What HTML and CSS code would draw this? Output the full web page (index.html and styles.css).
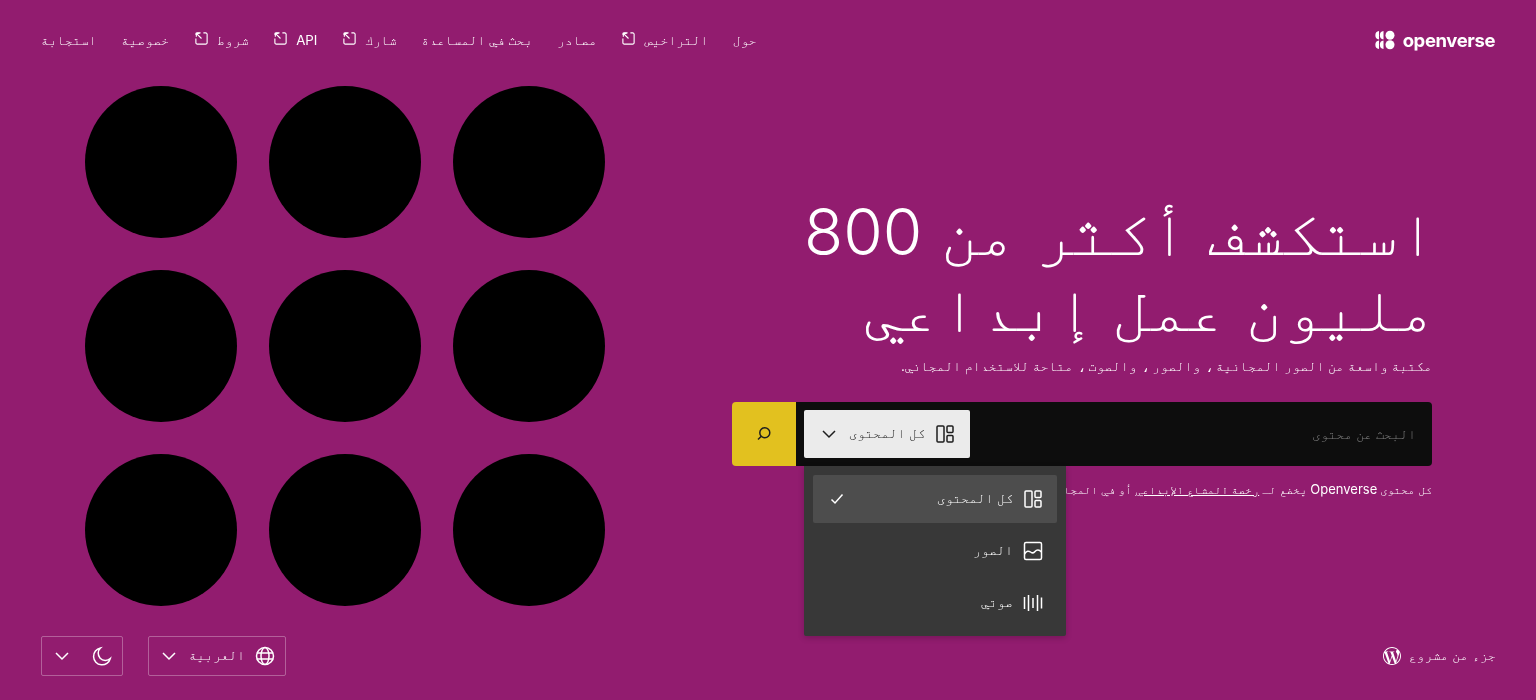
FILE: index.html
```html
<!DOCTYPE html>
<html lang="ar" dir="rtl">
<head>
  <meta charset="utf-8">
  <title>Openverse</title>
  <link rel="stylesheet" href="styles.css">
</head>
<body>
<svg class="icon-defs" width="0" height="0">
  <symbol id="ext" viewBox="0 0 16 16">
    <path d="M7 2H3.500A1.500 1.500 0 0 0 2 3.500V4M2 8v4.500A1.500 1.500 0 0 0 3.500 14h9a1.500 1.500 0 0 0 1.500-1.500v-9A1.500 1.500 0 0 0 12.500 2H10" fill="none" stroke="currentColor" stroke-width="1.200"/>
    <path d="M2.500 2.500 8 8M2.500 6V2.500H6" fill="none" stroke="currentColor" stroke-width="1.200"/>
  </symbol>
  <symbol id="all" viewBox="0 0 24 24">
    <rect x="4" y="4" width="7" height="16" rx="1" fill="none" stroke="currentColor" stroke-width="1.500"/>
    <rect x="14" y="4" width="6" height="6.500" rx="1" fill="none" stroke="currentColor" stroke-width="1.500"/>
    <rect x="14" y="13.500" width="6" height="6.500" rx="1" fill="none" stroke="currentColor" stroke-width="1.500"/>
  </symbol>
  <symbol id="chev" viewBox="0 0 24 24">
    <path d="M6 9l6 6 6-6" fill="none" stroke="currentColor" stroke-width="1.500"/>
  </symbol>
</svg>

<header class="top">
  <a class="logo">
    <span class="logo-text" dir="ltr">openverse</span>
    <svg width="20" height="20" viewBox="0 0 20 20">
      <path d="M4 1a4.300 4.300 0 0 0 0 8.500zM8.500 1a4.300 4.300 0 0 0 0 8.500zM4 10.500a4.300 4.300 0 0 0 0 8.500zM8.500 10.500a4.300 4.300 0 0 0 0 8.500z" fill="#fff"/>
      <circle cx="15" cy="5.200" r="4.500" fill="#fff"/>
      <circle cx="15" cy="14.800" r="4.500" fill="#fff"/>
    </svg>
  </a>
  <nav class="nav">
    <a>حول</a>
    <a>التراخيص <svg class="ext"><use href="#ext"/></svg></a>
    <a>مصادر</a>
    <a>بحث في المساعدة</a>
    <a>شارك <svg class="ext"><use href="#ext"/></svg></a>
    <a>API <svg class="ext"><use href="#ext"/></svg></a>
    <a>شروط <svg class="ext"><use href="#ext"/></svg></a>
    <a>خصوصية</a>
    <a>استجابة</a>
  </nav>
</header>

<main class="main">
  <section class="hero">
    <h1>استكشف أكثر من 800 مليون عمل إبداعي</h1>
    <p class="sub">مكتبة واسعة من الصور المجانية ، والصور ، والصوت ، متاحة للاستخدام المجاني.</p>
    <form class="search">
      <div class="search-field">
        <input class="search-input" placeholder="البحث عن محتوى">
        <button type="button" class="type-btn">
          <svg class="i24"><use href="#all"/></svg>
          <span class="lift">كل المحتوى</span>
          <svg class="i24"><use href="#chev"/></svg>
        </button>
      </div>
      <button type="button" class="search-btn">
        <svg width="20" height="20" viewBox="0 0 20 20"><circle cx="10.800" cy="8.800" r="5" fill="none" stroke="#1e1e1e" stroke-width="1.500"/><path d="M7.300 12.300 4 15.500" stroke="#1e1e1e" stroke-width="1.500"/></svg>
      </button>
      <div class="menu">
        <div class="menu-row is-active">
          <svg class="i24"><use href="#all"/></svg>
          <span class="menu-label lift">كل المحتوى</span>
          <svg class="i24" viewBox="0 0 24 24"><path d="M6.500 12.500 10 16l7.500-8.500" fill="none" stroke="#fff" stroke-width="1.500"/></svg>
        </div>
        <div class="menu-row">
          <svg class="i24" viewBox="0 0 24 24"><rect x="3.500" y="3.500" width="17" height="17" rx="1.500" fill="none" stroke="currentColor" stroke-width="1.500"/><path d="M3.500 15c2-3 4-3.500 6-2s3 1.500 4.500-.5 4-2.500 6.500.5" fill="none" stroke="currentColor" stroke-width="1.500"/></svg>
          <span class="menu-label lift">الصور</span>
        </div>
        <div class="menu-row">
          <svg class="i24" viewBox="0 0 24 24"><path d="M3.500 6v12M7.500 4v16M12 7v10M16.500 4v16M20.500 6.500v11" fill="none" stroke="currentColor" stroke-width="1.500"/></svg>
          <span class="menu-label lift">صوتي</span>
        </div>
      </div>
    </form>
    <p class="note">كل محتوى <span class="note-brand">Openverse</span> يخضع لـ <u>رخصة المشاع الإبداعي</u> أو في المجال العام.</p>
  </section>

  <section class="dots">
    <div class="dot"></div><div class="dot"></div><div class="dot"></div>
    <div class="dot"></div><div class="dot"></div><div class="dot"></div>
    <div class="dot"></div><div class="dot"></div><div class="dot"></div>
  </section>
</main>

<footer class="bottom">
  <a class="wp">
    <span class="lift">جزء من مشروع</span>
    <svg width="18" height="18" viewBox="0 0 24 24"><path fill="#fff" d="M21.469 6.825c.84 1.537 1.318 3.3 1.318 5.175 0 3.979-2.156 7.456-5.363 9.325l3.295-9.527c.615-1.54.82-2.771.82-3.864 0-.405-.026-.78-.07-1.11m-7.981.105c.647-.03 1.232-.105 1.232-.105.582-.075.514-.93-.067-.899 0 0-1.755.135-2.88.135-1.064 0-2.85-.15-2.85-.15-.585-.03-.661.855-.075.885 0 0 .54.061 1.125.09l1.68 4.605-2.37 7.08L5.354 6.9c.649-.03 1.234-.1 1.234-.1.585-.075.516-.93-.065-.896 0 0-1.746.138-2.874.138-.2 0-.438-.008-.69-.015C4.911 3.15 8.235 1.215 12 1.215c2.809 0 5.365 1.072 7.286 2.833-.046-.003-.091-.009-.141-.009-1.06 0-1.812.923-1.812 1.914 0 .89.513 1.643 1.06 2.531.411.72.89 1.643.89 2.977 0 .915-.354 1.994-.821 3.479l-1.075 3.585-3.9-11.61.001.014zM12 22.784c-1.059 0-2.081-.153-3.048-.437l3.237-9.406 3.315 9.087c.024.053.05.101.078.149-1.12.393-2.325.609-3.582.609M1.211 12c0-1.564.336-3.05.935-4.39L7.29 21.709C3.694 19.96 1.212 16.271 1.211 12M12 0C5.385 0 0 5.385 0 12s5.385 12 12 12 12-5.385 12-12S18.615 0 12 0"/></svg>
  </a>
  <div class="footer-tools">
    <div class="pick pick-lang">
      <svg class="i24" viewBox="0 0 24 24"><g fill="none" stroke="#fff" stroke-width="1.500"><circle cx="12" cy="12" r="8.500"/><ellipse cx="12" cy="12" rx="4" ry="8.500"/><path d="M3.800 9h16.400M3.800 15h16.400"/></g></svg>
      <span class="lift">العربية</span>
      <svg class="i24"><use href="#chev"/></svg>
    </div>
    <div class="pick pick-theme">
      <svg class="i24" viewBox="0 0 24 24"><path d="M10.500 4a8.500 8.500 0 1 0 9.800 10.500 7 7 0 0 1-9.800-10.500z" fill="none" stroke="#fff" stroke-width="1.500"/></svg>
      <svg class="i24"><use href="#chev"/></svg>
    </div>
  </div>
</footer>
</body>
</html>
```

FILE: styles.css
```css
* {
  box-sizing: border-box;
}

body {
  margin: 0;
  height: 700px;
  overflow: hidden;
  display: flex;
  flex-direction: column;
  background-color: #921c6f;
  color: #fff;
  font-family: Inter, FreeMono, "DejaVu Sans Mono", monospace;
  will-change: transform;
}

.icon-defs {
  position: absolute;
}

.i24 {
  width: 24px;
  height: 24px;
  flex: none;
}

/* the arabic fallback sits a px low in flex rows */
.lift {
  padding-bottom: 2px;
}

.top {
  height: 80px;
  flex: none;
  padding: 0 41px;
  display: flex;
  align-items: center;
  justify-content: space-between;
}

.logo {
  display: flex;
  align-items: center;
  gap: 8px;
}

.logo-text {
  font-size: 18.5px;
  font-weight: 700;
  letter-spacing: -0.4px;
}

.nav {
  display: flex;
  gap: 24.5px;
  font-size: 13.3px;
}

.nav a {
  display: flex;
  align-items: center;
  gap: 8px;
  padding-bottom: 1px;
}

.ext {
  width: 15px;
  height: 15px;
  margin-top: -3px;
}

.main {
  flex: 1;
  display: flex;
  justify-content: space-between;
  padding: 6px 104px 0 85px;
}

.hero {
  width: 700px;
  padding-top: 108.4px;
}

.hero h1 {
  margin: 0 -5px 0 0;
  font-size: 64px;
  line-height: 76px;
  font-weight: 300;
}

.sub {
  margin: 10px 0 0;
  font-size: 13.4px;
  line-height: 20px;
}

.search {
  position: relative;
  margin-top: 25.6px;
  height: 64px;
  display: flex;
}

.search-field {
  flex: 1;
  display: flex;
  align-items: center;
  padding: 8px;
  background-color: #0d0d0d;
  border-radius: 0 4px 4px 0;
}

.search-input {
  flex: 1;
  min-width: 0;
  padding: 0 8px;
  border: 0;
  outline: 0;
  background: none;
  color: #fff;
  font: 13.33px Inter, FreeMono, "DejaVu Sans Mono", monospace;
}

.search-input::placeholder {
  color: #808080;
}

.type-btn {
  width: 166px;
  height: 48px;
  padding: 0 13px;
  display: flex;
  align-items: center;
  gap: 8px;
  border: 0;
  border-radius: 2px;
  background-color: #ebebeb;
  color: #1e1e1e;
  font: 13.33px Inter, FreeMono, "DejaVu Sans Mono", monospace;
}

.type-btn span {
  flex: 1;
  text-align: right;
}

.search-btn {
  width: 64px;
  flex: none;
  display: flex;
  align-items: center;
  justify-content: center;
  border: 0;
  border-radius: 4px 0 0 4px;
  background-color: #e2c11f;
}

.menu {
  position: absolute;
  top: 64px;
  left: 72px;
  z-index: 2;
  width: 262px;
  height: 170px;
  padding: 9px;
  background-color: #383838;
  border-radius: 0 0 2px 2px;
  box-shadow: 0 2px 6px rgba(0, 0, 0, 0.2);
}

.menu-row {
  height: 48px;
  margin-bottom: 4px;
  padding: 0 12px;
  display: flex;
  align-items: center;
  gap: 8px;
  border-radius: 2px;
  font-size: 13.33px;
}

.menu-row.is-active {
  background-color: #4d4d4d;
}

.menu-label {
  flex: 1;
}

.note {
  margin: 15px 0 0;
  font-size: 11.5px;
  line-height: 16px;
  white-space: nowrap;
  overflow: hidden;
}

.note-brand {
  font-size: 13px;
}

.dots {
  width: 520px;
  height: 520px;
  display: grid;
  grid-template-columns: repeat(3, 152px);
  grid-auto-rows: 152px;
  gap: 32px;
}

.dot {
  border-radius: 50%;
  background-color: #000;
}

.bottom {
  height: 64px;
  flex: none;
  padding: 0 40px 24px 41px;
  display: flex;
  align-items: center;
  justify-content: space-between;
  font-size: 13.33px;
}

.wp {
  display: flex;
  align-items: center;
  gap: 8px;
}

.footer-tools {
  display: flex;
  gap: 25px;
}

.pick {
  height: 40px;
  padding: 0 8px;
  display: flex;
  align-items: center;
  gap: 8px;
  border: 1px solid rgba(255, 255, 255, 0.3);
  border-radius: 2px;
}

.pick-lang {
  width: 138px;
}

.pick-lang span {
  flex: 1;
}

.pick-theme {
  width: 82px;
  justify-content: space-between;
}
```
